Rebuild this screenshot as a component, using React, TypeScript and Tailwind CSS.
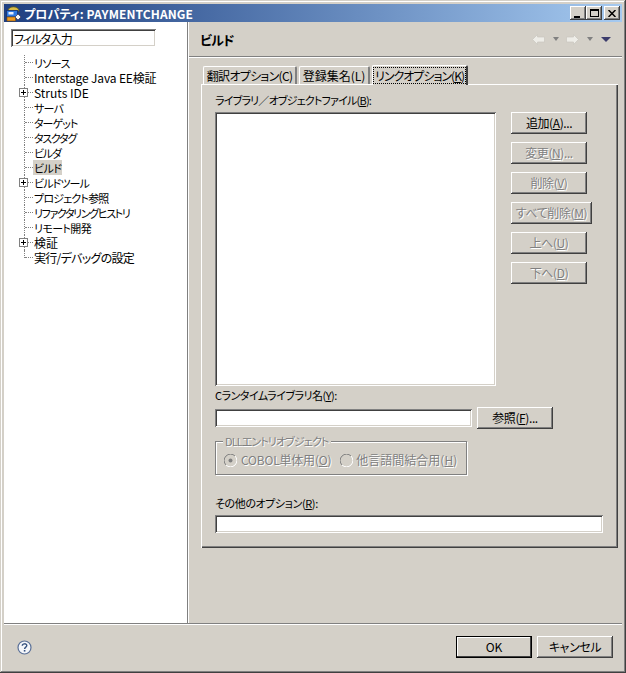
import React from 'react';

const raised = 'shadow-[inset_-1px_-1px_#404040,inset_1px_1px_#ffffff,inset_-2px_-2px_#808080,inset_2px_2px_#d4d0c8]';
const sunken = 'shadow-[inset_1px_1px_#808080,inset_-1px_-1px_#ffffff,inset_2px_2px_#404040,inset_-2px_-2px_#d4d0c8]';
const disabled = 'text-[#808080] [text-shadow:1px_1px_0_#ffffff]';

const treeItems = [
  { label: 'リソース', fit: 'text-[11px] leading-[17px] tracking-[-0.6px]' },
  { label: 'Interstage Java EE検証', fit: 'tracking-[-0.15px]' },
  { label: 'Struts IDE', plus: true, fit: '' },
  { label: 'サーバ', fit: 'text-[11px] leading-[17px] tracking-[-0.8px]' },
  { label: 'ターゲット', fit: 'text-[11px] leading-[17px] tracking-[-1px]' },
  { label: 'タスクタグ', fit: 'text-[11px] leading-[17px] tracking-[-1.3px]' },
  { label: 'ビルダ', fit: 'text-[11px] leading-[17px] tracking-[-1.2px]' },
  { label: 'ビルド', selected: true, fit: 'text-[11px] leading-[17px] tracking-[-0.6px]' },
  { label: 'ビルドツール', plus: true, fit: 'text-[11px] leading-[17px] tracking-[-0.9px]' },
  { label: 'プロジェクト参照', fit: 'text-[11px] leading-[17px] tracking-[-0.8px]' },
  { label: 'リファクタリングヒストリ', fit: 'text-[11px] leading-[17px] tracking-[-1.4px]' },
  { label: 'リモート開発', fit: 'text-[11px] leading-[17px] tracking-[-0.6px]' },
  { label: '検証', plus: true, fit: '' },
  { label: '実行/デバッグの設定', last: true, fit: 'tracking-[-0.7px]' },
];

function Btn({ w = 'w-[76px]', off, children }: { w?: string; off?: boolean; children: React.ReactNode }) {
  return (
    <div className={`${w} h-[22px] shrink-0 flex items-center justify-center pb-[2px] bg-[#d4d0c8] whitespace-nowrap tracking-[-0.4px] ${raised} ${off ? disabled : 'text-black'}`}>
      <span className="block leading-[15px]">{children}</span>
    </div>
  );
}

function CaptionBtn({ children }: { children: React.ReactNode }) {
  return <div className={`w-[16px] h-[14px] bg-[#d4d0c8] flex items-center justify-center ${raised}`}>{children}</div>;
}

function Radio({ checked }: { checked?: boolean }) {
  return (
    <svg width="13" height="13" viewBox="0 0 13 13" className="shrink-0">
      <path d="M2 11A6 6 0 0 1 11 2" fill="none" stroke="#808080" strokeWidth="1" />
      <path d="M11 2A6 6 0 0 1 2 11" fill="none" stroke="#ffffff" strokeWidth="1" />
      <circle cx="6.5" cy="6.5" r="4.6" fill="#d4d0c8" />
      {checked && <circle cx="6.5" cy="6.5" r="2" fill="#808080" />}
    </svg>
  );
}

function NavArrow({ flip }: { flip?: boolean }) {
  return (
    <svg width="13" height="11" viewBox="0 0 13 11" className={flip ? '-scale-x-100' : ''}>
      <path d="M0.5 5.5L5.5 0.5V3H12.5V8H5.5V10.5Z" fill="#eeede8" stroke="#c8c6bf" strokeWidth="0.7" />
    </svg>
  );
}

function SmallDrop() {
  return (
    <svg width="6" height="4" viewBox="0 0 6 4" className="block">
      <path d="M0 0H6L3 4Z" fill="#808080" />
    </svg>
  );
}

export default function App() {
  return (
    <div className="w-[626px] h-[673px] bg-[#d4d0c8] flex flex-col p-[4px] pb-[2px] overflow-hidden text-[12px] leading-[15px] text-black [font-feature-settings:'palt'] font-['Noto_Sans_CJK_JP','Liberation_Sans',sans-serif] shadow-[inset_-1px_-1px_#404040,inset_1px_1px_#d4d0c8,inset_-2px_-2px_#808080,inset_2px_2px_#ffffff]">
      {/* Title bar */}
      <div className="h-[18px] shrink-0 flex items-center bg-gradient-to-r from-[#1f3f80] to-[#a6caf0] pl-[1px] pr-[2px]">
        <svg width="17" height="17" viewBox="0 0 17 17" className="shrink-0">
          <path d="M3 6C3 0.5 14 0.5 14 6Z" fill="#d8bc48" stroke="#5f5a20" strokeWidth="0.8" />
          <rect x="1.5" y="5.5" width="11" height="6.5" fill="#2f78e0" stroke="#17306f" strokeWidth="0.8" />
          <rect x="3.5" y="7" width="5" height="2.5" fill="#e8f0ff" />
          <rect x="2" y="12" width="8.5" height="4" fill="#f09a20" stroke="#7a4a10" strokeWidth="0.6" />
          <path d="M13 9l3 3-3 3-3-3z" fill="#f8f8f8" stroke="#404060" strokeWidth="0.8" />
        </svg>
        <span className="ml-[2px] text-white font-bold tracking-[0.1px] whitespace-nowrap">プロパティ: PAYMENTCHANGE</span>
        <div className="ml-auto flex items-center">
          <CaptionBtn>
            <div className="w-[6px] h-[2px] bg-black mt-[7px] mr-[2px]" />
          </CaptionBtn>
          <CaptionBtn>
            <div className="w-[9px] h-[8px] border border-black border-t-2" />
          </CaptionBtn>
          <div className="ml-[2px]">
            <CaptionBtn>
              <svg width="8" height="7" viewBox="0 0 8 7">
                <path d="M0.5 0L7.5 7M7.5 0L0.5 7" stroke="#000" strokeWidth="1.5" />
              </svg>
            </CaptionBtn>
          </div>
        </div>
      </div>

      {/* Body */}
      <div className="flex flex-1 min-h-0 border-b border-[#808080]">
        {/* Left tree */}
        <div className="w-[184px] shrink-0 bg-white border-r border-[#808080] pt-[7px]">
          <div className={`ml-[7px] w-[145px] h-[18px] px-[3px] flex items-center bg-white tracking-[-1.2px] ${sunken}`}>フィルタ入力</div>
          <div className="mt-[8px]">
            {treeItems.map((item) => (
              <div key={item.label} className="relative h-[15px] flex items-center pl-[29px]">
                <div className={`absolute left-[20px] top-0 w-0 border-l border-dotted border-[#808080] ${item.last ? 'h-[8px]' : 'h-[15px]'}`} />
                <div className="absolute left-[21px] top-[7px] w-[8px] border-t border-dotted border-[#808080]" />
                {item.plus && (
                  <div className="absolute left-[15px] top-[3px] w-[9px] h-[9px] bg-white border border-[#808080] flex items-center justify-center">
                    <svg width="7" height="7" viewBox="0 0 7 7">
                      <path d="M1 3.5H6M3.5 1V6" stroke="#000" strokeWidth="1" />
                    </svg>
                  </div>
                )}
                <span className={`block h-[15px] px-[1px] whitespace-nowrap ${item.fit} ${item.selected ? 'bg-[#d4d0c8]' : ''}`}>{item.label}</span>
              </div>
            ))}
          </div>
        </div>

        {/* Right pane */}
        <div className="flex-1 min-w-0 flex flex-col border-l border-white">
          <div className="h-[35px] shrink-0 flex items-center pl-[11px] pr-[11px] border-b border-[#808080] font-bold text-[13px] tracking-[-0.8px]">
            <span>ビルド</span>
            <div className="ml-auto flex items-center">
              <NavArrow />
              <div className="ml-[8px]"><SmallDrop /></div>
              <div className="ml-[7px]"><NavArrow flip /></div>
              <div className="ml-[8px]"><SmallDrop /></div>
              <svg width="10" height="5" viewBox="0 0 10 5" className="ml-[8px]">
                <path d="M0 0H10L5 5Z" fill="#3c3c6c" />
              </svg>
            </div>
          </div>
          <div className="h-px bg-white shrink-0" />

          <div className="pl-[12px] pr-[4px] pt-[6px]">
            {/* Tabs */}
            <div className="flex items-end h-[20px] pl-[2px] gap-[2px] relative z-10 whitespace-nowrap">
              <div className="w-[94px] h-[18px] flex items-center justify-center tracking-[-0.7px] border-t border-l border-white border-r-2 border-r-[#808080] rounded-t-[2px]">
                翻訳オプション(C)
              </div>
              <div className="w-[71px] h-[18px] flex items-center justify-center border-t border-l border-white border-r-2 border-r-[#808080] rounded-t-[2px]">
                登録集名(L)
              </div>
              <div className="w-[96px] h-[20px] -mb-px flex items-center justify-center bg-[#d4d0c8] border-t border-l border-white border-r-2 border-r-[#404040] rounded-t-[2px]">
                <span className="block border border-dotted border-black px-[1px] leading-[15px] tracking-[-1px]">
                  リンクオプション(<u>K</u>)
                </span>
              </div>
            </div>

            {/* Tab panel */}
            <div className="h-[464px] pl-[14px] pt-[10px] flex flex-col shadow-[inset_1px_1px_#ffffff,inset_-1px_-1px_#404040,inset_-2px_-2px_#808080]">
              <div className="h-[15px] leading-[13px] text-[11px] tracking-[-0.8px]">
                ライブラリ／オブジェクトファイル(<u>B</u>):
              </div>
              <div className="mt-[3px] flex">
                <div className={`w-[281px] h-[274px] bg-white ${sunken}`} />
                <div className="ml-[15px] flex flex-col gap-[8px]">
                  <Btn>追加(<u>A</u>)...</Btn>
                  <Btn off>変更(<u>N</u>)...</Btn>
                  <Btn off>削除(<u>V</u>)</Btn>
                  <Btn off w="w-[81px]">すべて削除(<u>M</u>)</Btn>
                  <Btn off>上へ(<u>U</u>)</Btn>
                  <Btn off>下へ(<u>D</u>)</Btn>
                </div>
              </div>

              <div className="mt-[3px] h-[15px] leading-[13px] text-[11px] tracking-[-0.5px]">
                Cランタイムライブラリ名(<u>Y</u>):
              </div>
              <div className="mt-[3px] flex items-center">
                <div className={`w-[257px] h-[18px] bg-white ${sunken}`} />
                <div className="ml-[5px]">
                  <Btn>参照(<u>F</u>)...</Btn>
                </div>
              </div>

              {/* DLL group */}
              <div className="mt-[12px] relative w-[252px] h-[34px] border border-[#808080] shadow-[1px_1px_#ffffff,inset_1px_1px_#ffffff] flex items-end pl-[8px] pb-[7px]">
                <span className={`absolute -top-[8px] left-[7px] px-[2px] bg-[#d4d0c8] text-[11px] tracking-[-0.9px] ${disabled}`}>DLLエントリオブジェクト</span>
                <Radio checked />
                <span className={`ml-[4px] whitespace-nowrap tracking-[-0.2px] ${disabled}`}>COBOL単体用(<u>O</u>)</span>
                <div className="ml-[9px]">
                  <Radio />
                </div>
                <span className={`ml-[3px] whitespace-nowrap ${disabled}`}>他言語間結合用(<u>H</u>)</span>
              </div>

              <div className="mt-[22px] h-[15px] leading-[13px] text-[11px] tracking-[-0.4px]">
                その他のオプション(<u>R</u>):
              </div>
              <div className={`mt-[3px] w-[388px] h-[18px] bg-white ${sunken}`} />
            </div>
          </div>
        </div>
      </div>

      {/* Footer */}
      <div className="border-t border-white flex items-start pt-[11px] pl-[13px] pr-[4px] h-[47px] shrink-0">
        <svg width="15" height="15" viewBox="0 0 15 15" className="shrink-0 mt-[4px]">
          <circle cx="7.5" cy="7.5" r="6.5" fill="#f4f6fa" stroke="#5a7098" strokeWidth="1.2" />
          <path d="M5.3 5.8C5.3 3.2 9.8 3.2 9.8 5.6C9.8 7.2 7.6 7 7.6 9" fill="none" stroke="#34507e" strokeWidth="1.4" />
          <rect x="6.8" y="10" width="1.6" height="1.6" fill="#34507e" />
        </svg>
        <div className="ml-auto flex items-center gap-[5px] mr-[5px]">
          <div className="w-[76px] h-[22px] pb-[2px] flex items-center justify-center bg-[#d4d0c8] shadow-[inset_0_0_0_1px_#000000,inset_-2px_-2px_#404040,inset_2px_2px_#ffffff]">OK</div>
          <Btn>キャンセル</Btn>
        </div>
      </div>
    </div>
  );
}
